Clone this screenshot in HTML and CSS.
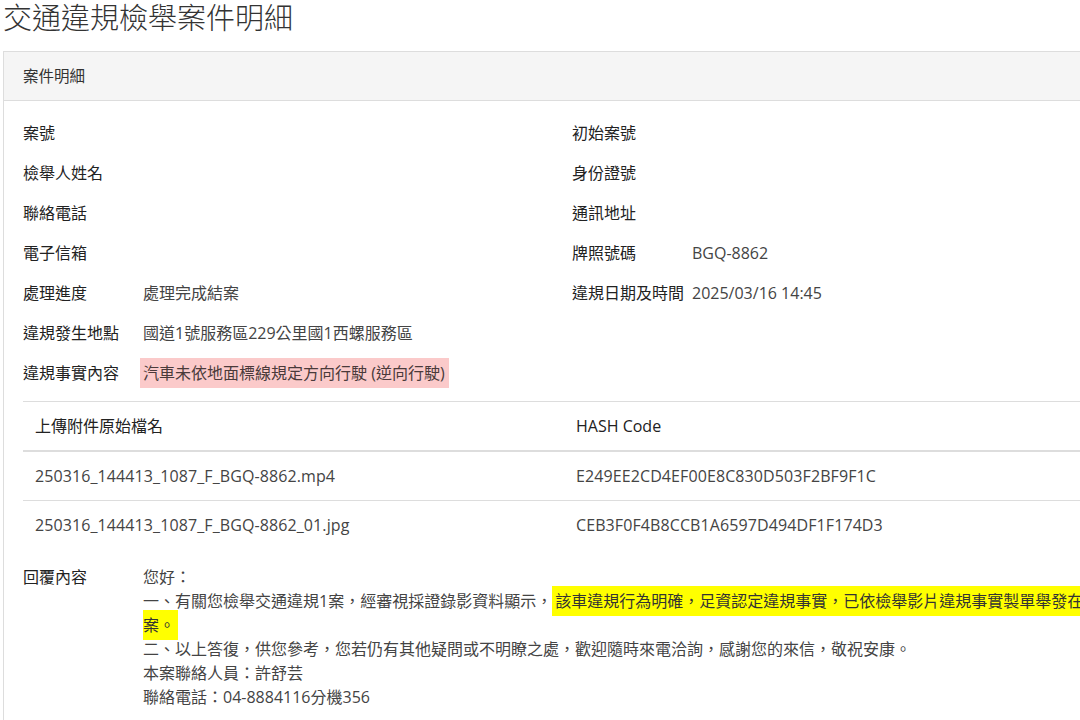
FILE: index.html
```html
<!DOCTYPE html>
<html lang="zh-Hant">
<head>
<meta charset="utf-8">
<title>交通違規檢舉案件明細</title>
<link rel="stylesheet" href="styles.css">
</head>
<body>
<div class="page">
  <h1 class="title">交通違規檢舉案件明細</h1>
  <section class="panel">
    <div class="panel-heading">案件明細</div>
    <div class="panel-body">
      <div class="fields">
        <div class="field"><div class="label">案號</div><div class="value"></div></div>
        <div class="field"><div class="label">初始案號</div><div class="value"></div></div>
        <div class="field"><div class="label">檢舉人姓名</div><div class="value"></div></div>
        <div class="field"><div class="label">身份證號</div><div class="value"></div></div>
        <div class="field"><div class="label">聯絡電話</div><div class="value"></div></div>
        <div class="field"><div class="label">通訊地址</div><div class="value"></div></div>
        <div class="field"><div class="label">電子信箱</div><div class="value"></div></div>
        <div class="field"><div class="label">牌照號碼</div><div class="value">BGQ-8862</div></div>
        <div class="field"><div class="label">處理進度</div><div class="value">處理完成結案</div></div>
        <div class="field"><div class="label">違規日期及時間</div><div class="value">2025/03/16 14:45</div></div>
        <div class="field full"><div class="label">違規發生地點</div><div class="value">國道1號服務區229公里國1西螺服務區</div></div>
        <div class="field full"><div class="label">違規事實內容</div><div class="value"><span class="mark-pink">汽車未依地面標線規定方向行駛 (逆向行駛)</span></div></div>
      </div>

      <table class="files">
        <thead>
          <tr><th class="col-name">上傳附件原始檔名</th><th>HASH Code</th></tr>
        </thead>
        <tbody>
          <tr><td>250316_144413_1087_F_BGQ-8862.mp4</td><td>E249EE2CD4EF00E8C830D503F2BF9F1C</td></tr>
          <tr><td>250316_144413_1087_F_BGQ-8862_01.jpg</td><td>CEB3F0F4B8CCB1A6597D494DF1F174D3</td></tr>
        </tbody>
      </table>

      <div class="reply">
        <div class="label">回覆內容</div>
        <div class="reply-text">
          <p>您好：</p>
          <p>一、有關您檢舉交通違規1案，經審視採證錄影資料顯示，<span class="mark-yellow">該車違規行為明確，足資認定違規事實，已依檢舉影片違規事實製單舉發在案。</span></p>
          <p>二、以上答復，供您參考，您若仍有其他疑問或不明瞭之處，歡迎隨時來電洽詢，感謝您的來信，敬祝安康。</p>
          <p>本案聯絡人員：許舒芸</p>
          <p>聯絡電話：04-8884116分機356</p>
        </div>
      </div>
    </div>
  </section>
</div>
</body>
</html>
```

FILE: styles.css
```css
* {
  box-sizing: border-box;
}

html {
  overflow: hidden;
}

body {
  margin: 0;
  background: #ffffff;
  color: #333333;
  font-family: "Open Sans", "Noto Sans CJK TC", sans-serif;
  font-size: 16px;
  line-height: 24px;
}

.page {
  width: 1160px;
  padding-left: 3px;
}

.title {
  margin: 0 0 15px 0;
  font-size: 29px;
  line-height: 36px;
  font-weight: 300;
  color: #333333;
}

.panel {
  width: 1140px;
  border: 1px solid #dddddd;
  border-right: none;
  background: #ffffff;
}

.panel-heading {
  background: #f5f5f5;
  border-bottom: 1px solid #dddddd;
  padding: 12px 19px;
  font-size: 15.5px;
  color: #333333;
}

.panel-body {
  padding: 12px 20px 20px 19px;
}

.fields {
  display: grid;
  grid-template-columns: 549px 549px;
}

.field {
  display: flex;
  padding: 8px 0;
}

.field.full {
  grid-column: 1 / span 2;
}

.label {
  width: 120px;
  flex: none;
  color: #222222;
}

.value {
  flex: 1;
  color: #444444;
}

.mark-pink {
  background: #fbcaca;
  padding: 4px 4px 4px 3px;
  margin-left: -3px;
  color: #4a3a3a;
}

.files {
  width: 1098px;
  margin-top: 8px;
  border-collapse: collapse;
}

.files th,
.files td {
  text-align: left;
  padding: 12px 12px;
  font-weight: 400;
  vertical-align: top;
}

.files th {
  border-top: 1px solid #dddddd;
  border-bottom: 2px solid #dddddd;
  color: #222222;
}

.files .col-name {
  width: 541px;
}

.files tbody tr + tr td {
  border-top: 1px solid #dddddd;
}

.files td {
  color: #444444;
  letter-spacing: 0.1px;
}

.reply {
  display: flex;
  margin-top: 16px;
}

.reply-text {
  width: 948px;
  color: #444444;
}

.reply-text p {
  margin: 0;
}

.mark-yellow {
  background: #ffff00;
  padding: 4px 3px;
  color: #333333;
}
```
